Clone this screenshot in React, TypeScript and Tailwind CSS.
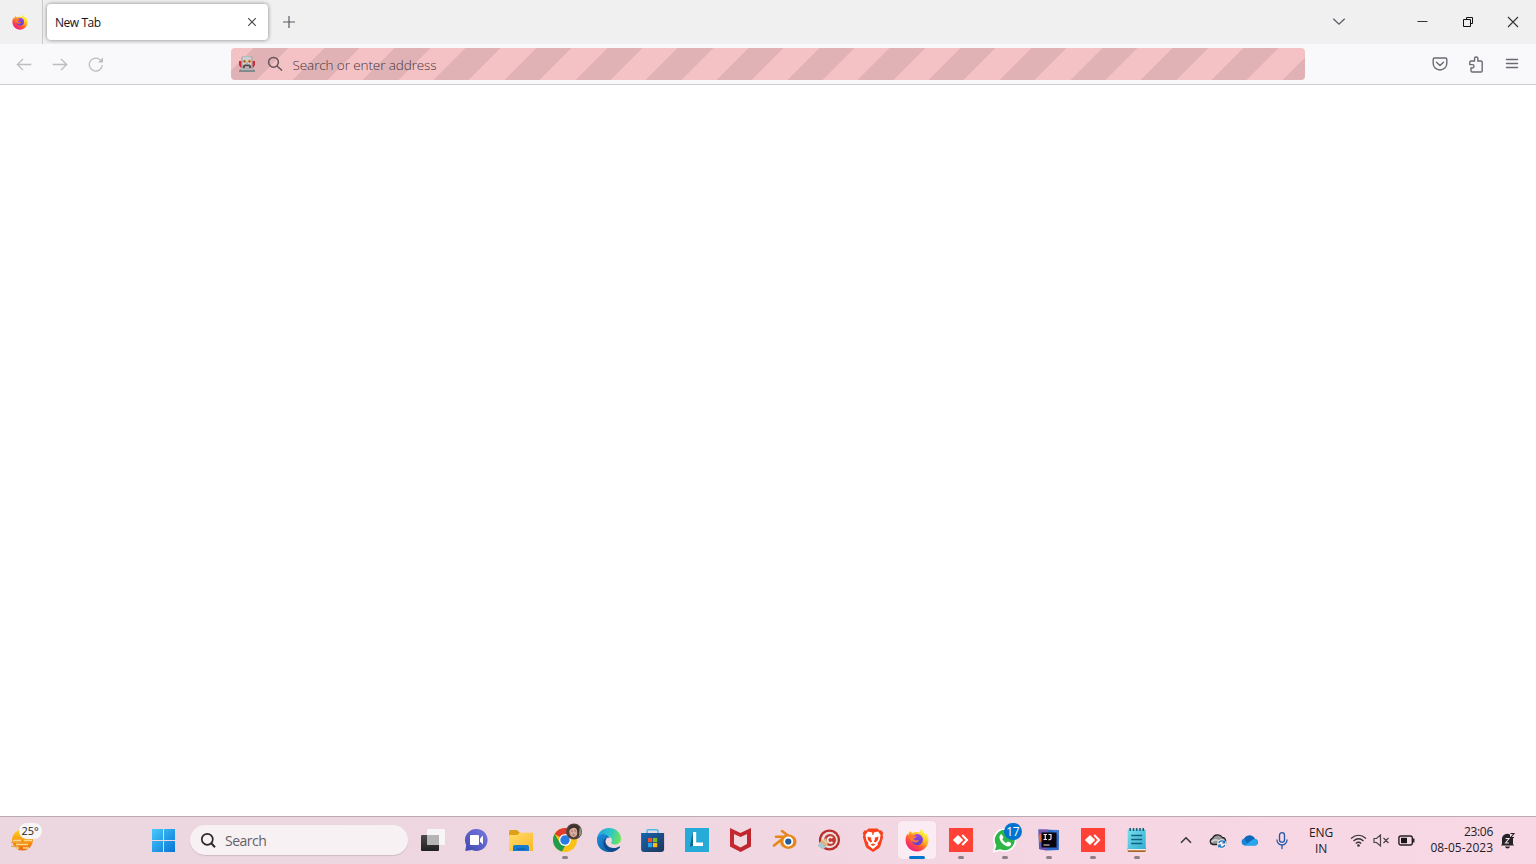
import type { ReactNode } from "react";

const UI = "font-['Open_Sans','Noto_Sans',sans-serif]";

function Firefox({ size, id }: { size: number; id: string }) {
  return (
    <svg width={size} height={size} viewBox="0 0 24 24">
      <defs>
        <linearGradient id={`${id}a`} x1="0.85" y1="0.1" x2="0.25" y2="0.95">
          <stop offset="0.1" stopColor="#fff044" />
          <stop offset="0.4" stopColor="#ffb41f" />
          <stop offset="0.65" stopColor="#ff5a34" />
          <stop offset="1" stopColor="#f21a80" />
        </linearGradient>
        <linearGradient id={`${id}b`} x1="0.3" y1="0" x2="0.6" y2="1">
          <stop offset="0" stopColor="#a646e8" />
          <stop offset="1" stopColor="#5a3fd0" />
        </linearGradient>
      </defs>
      <path
        d="M16.2.6c-1 1.3-1.3 2.700-.9 4.100-1.400-.7-3.200-.9-4.600-.6C9.500 4.100 8.600 4.500 7.800 5 6.700 4.700 6 4 5.600 2.900 4.300 3.700 3.600 5 3.500 6.400 2.700 7 2.400 7.100 2.500 5.700 1.100 7.700.5 10.200.6 12.800 1 19 6 23.500 12 23.500c6.500 0 11.500-5 11.500-11.400 0-2.800-.9-5.200-2.700-7.100.1.900.1 1.600-.1 2.300C19.700 4.900 17.200 3.500 16.200.6z"
        fill={`url(#${id}a)`}
      />
      <circle cx="12.300" cy="11.600" r="5.600" fill={`url(#${id}b)`} />
      <path d="M3 7.500c2-1.800 4.300-1.200 5.600.2 1.300-.2 2.500.2 3 .8-.1 1.100-2.100 1.300-2.600 2.100-.3 1.600 1.400 2.200 3.200 1.700 1.200-.4 1.800-.1 1.500.5-.8 1.700-3.700 2.500-6 .8C5 12 5 10.500 3 7.500z" fill="#ff7a2a" />
    </svg>
  );
}

function Robot() {
  return (
    <svg width="18" height="18" viewBox="0 0 18 18">
      <path d="M1 6h3v6.500H2.500L1 10zM17 6h-3v6.500h1.500L17 10z" fill="#d0283a" />
      <rect x="3.300" y="1" width="11.400" height="14" rx="2.500" fill="#a2a5a7" />
      <rect x="4.500" y="1.500" width="9" height="9.500" rx="1.500" fill="#cccfd0" />
      <circle cx="6.500" cy="6.300" r="1.600" fill="#e88b3e" />
      <circle cx="11.500" cy="6.300" r="1.600" fill="#e88b3e" />
      <circle cx="6.500" cy="6.300" r=".7" fill="#65451f" />
      <circle cx="11.500" cy="6.300" r=".7" fill="#65451f" />
      <path d="M8.300 8.500L9 7l.7 1.500z" fill="#80503a" />
      <path d="M5 13v-2.200l1.500-1.300h5l1.500 1.300V13z" fill="#56474a" />
      <path d="M6.800 11.300h4.400V13H6.800z" fill="#c8b9b6" />
      <path d="M1 17v-1.700l2-1.300h12l2 1.300V17z" fill="#86898c" />
      <path d="M3 14.500h12" stroke="#b9bdbf" />
    </svg>
  );
}

function AnyDesk() {
  return (
    <svg width="24" height="24" viewBox="0 0 24 24">
      <path d="M0 0h24v24H0z" fill="#ff4136" />
      <path d="M9 6.900l5.200 5.100L9 17.100 3.900 12z" fill="#fff" />
      <path d="M12.500 7.800l1.400-1.500 5.600 5.700-5.600 5.700-1.400-1.500 4-4.200z" fill="#fff" />
    </svg>
  );
}

const apps: { name: string; running?: boolean; active?: boolean; badge?: string; icon: ReactNode }[] = [
  {
    name: "taskview",
    icon: (
      <svg width="24" height="24" viewBox="0 0 24 24">
        <defs>
          <linearGradient id="tv" x1="0" y1="0" x2="0" y2="1"><stop stopColor="#4a4a4a" /><stop offset="1" stopColor="#202020" /></linearGradient>
        </defs>
        <rect x="0" y="7" width="18" height="16" rx="1" fill="url(#tv)" />
        <rect x="6" y="1" width="18" height="16" rx="1" fill="#f7f5f6" />
        <path d="M6 7H18v10H6z" fill="#b5b5b5" />
      </svg>
    ),
  },
  {
    name: "chat",
    icon: (
      <svg width="24" height="24" viewBox="0 0 24 24">
        <defs>
          <linearGradient id="ch" x1="0" y1="1" x2="1" y2="0"><stop stopColor="#4049ad" /><stop offset="1" stopColor="#7979e3" /></linearGradient>
        </defs>
        <path d="M11.500 1A11 11 0 1 1 7 22L.3 23 1.200 17A11 11 0 0 1 11.500 1z" fill="url(#ch)" />
        <rect x="5" y="7" width="9" height="10" rx="1" fill="#fff" />
        <path d="M15 10.500l3-3v9l-3-3z" fill="#fff" />
      </svg>
    ),
  },
  {
    name: "explorer",
    icon: (
      <svg width="26" height="24" viewBox="0 0 26 24">
        <defs>
          <linearGradient id="ex" x1="0" y1="0" x2="1" y2="1"><stop stopColor="#ffdc69" /><stop offset="1" stopColor="#fbb929" /></linearGradient>
        </defs>
        <path d="M1 3.500Q1 2 2.500 2H9l3 3v3H1z" fill="#dfa017" />
        <path d="M1 7h8l3-2.200h13V23H1z" fill="url(#ex)" />
        <path d="M5 23v-4q0-2 2-2h12q2 0 2 2v4z" fill="#147bcf" />
        <path d="M8.500 21h9" stroke="#09549d" strokeWidth="1" />
      </svg>
    ),
  },
  {
    name: "chrome",
    running: true,
    icon: (
      <svg className="overflow-visible" width="30" height="30" viewBox="0 2 30 30">
        <circle cx="15" cy="17" r="12" fill="#fbc116" />
        <path d="M15 17L4.600 11A12 12 0 0 1 25.400 11H15z" fill="#e33b2e" />
        <path d="M4.600 11L10 20l5 3-3 5.600A12 12 0 0 1 4.600 11z" fill="#229c4b" />
        <circle cx="15" cy="17" r="5.900" fill="#fff" />
        <circle cx="15" cy="17" r="4.700" fill="#287ae6" />
        <circle cx="24" cy="8.500" r="8" fill="#53413e" />
        <path d="M30 4q3 4 0 9l-2 1.500z" fill="#8d9274" />
        <ellipse cx="23.500" cy="8.500" rx="4.200" ry="5.800" fill="#d8a898" />
        <path d="M18.500 8c0-7 8-8.500 10.500-3v9c-2-2-1.300-6-2.500-8-2-2.200-5-1-8 2z" fill="#3c302e" />
        <path d="M21.200 8h1.300M24.500 8h1.300M22.500 12h2" stroke="#70473f" strokeWidth=".8" />
      </svg>
    ),
  },
  {
    name: "edge",
    icon: (
      <svg width="24" height="24" viewBox="0 0 24 24">
        <defs>
          <linearGradient id="ed" x1="0" y1=".2" x2="1" y2=".4"><stop stopColor="#279be0" /><stop offset=".55" stopColor="#2dc5ca" /><stop offset="1" stopColor="#6be45e" /></linearGradient>
          <linearGradient id="eb" x1="0" y1="0" x2="1" y2="1"><stop stopColor="#1b8fdb" /><stop offset="1" stopColor="#104f9d" /></linearGradient>
        </defs>
        <path d="M0 12C0 5 5 0 12 0c7 0 12 5 12 10.500 0 4-3 6-6 6-2.500 0-4.500-1-3.500-2.500 1.600-2.500-.5-5.800-4.500-5.800C5 8.200 1 10 0 12z" fill="url(#ed)" />
        <path d="M0 12C0 6.500 5 5.500 8 6.500c3 .8 4.500 2.500 4.800 3.500-3.800-1-5.800 2.500-4.300 6 2.500 5.500 9.500 5.500 13.500 2.700.8-.3 1.100.1.700.7C16.500 27.500 0 25 0 12z" fill="url(#eb)" />
        <path d="M8.500 10.500C4 13.500 6.500 22 14 23.800c3.500-.3 7-2.500 8.700-4.400.4-.6.1-1-.7-.7-4 2.100-10.800 1.800-13.100-3.200-.8-2-.5-3.900 1.100-5.200z" fill="#114a8c" />
      </svg>
    ),
  },
  {
    name: "store",
    icon: (
      <svg width="24" height="24" viewBox="0 0 24 24">
        <defs>
          <linearGradient id="st" x1="0" y1="0" x2="1" y2="1"><stop stopColor="#1465b3" /><stop offset="1" stopColor="#233557" /></linearGradient>
        </defs>
        <path d="M.1 5h23v16q0 3-3 3h-17q-3 0-3-3z" fill="url(#st)" />
        <path d="M6 5V3q0-1.300 1.300-1.300h8.400Q17 1.700 17 3v2" fill="none" stroke="#44bfee" strokeWidth="1.600" />
        <path d="M7 10h4.200v4.200H7z" fill="#ef5228" /><path d="M12 10h4.200v4.200H12z" fill="#7ebb20" />
        <path d="M7 15h4.200v4.200H7z" fill="#23a4e9" /><path d="M12 15h4.200v4.200H12z" fill="#fbb917" />
      </svg>
    ),
  },
  {
    name: "lightshot",
    icon: (
      <svg width="24" height="24" viewBox="0 0 24 24">
        <path d="M0 0h24v24H0z" fill="#26abd9" />
        <path d="M7.500 4L5 19l3-1.500z" fill="#155c83" />
        <path d="M8 4h3.200v10.500H18V18H8z" fill="#fff" />
      </svg>
    ),
  },
  {
    name: "mcafee",
    icon: (
      <svg width="24" height="24" viewBox="0 0 24 24">
        <path d="M1 0l10.500 5L22 0v18.500L11.500 24 1 18.500z" fill="#c5282f" />
        <path d="M5 6l6.500 3L18 6v10l-6.500 3.500L5 16z" fill="#f0d9e1" />
        <path d="M11.500 5L22 0v18.500L11.500 24v-4.500L18 16V6l-6.500 3z" fill="#a8202a" opacity=".2" />
      </svg>
    ),
  },
  {
    name: "blender",
    icon: (
      <svg width="26" height="24" viewBox="0 0 26 24">
        <path d="M2 17.500L13.500 8.500M4 8.800h12M10 3l10 7.500" stroke="#e6861b" strokeWidth="2.600" strokeLinecap="round" />
        <ellipse cx="16.300" cy="13.700" rx="8.200" ry="7.300" fill="#e6861b" />
        <circle cx="16.300" cy="13.500" r="4.900" fill="#fff" />
        <circle cx="16.300" cy="13.500" r="3.100" fill="#215b98" />
      </svg>
    ),
  },
  {
    name: "ccleaner",
    icon: (
      <svg width="24" height="24" viewBox="0 0 24 24">
        <circle cx="12.500" cy="12" r="10.600" fill="#b92f2b" />
        <circle cx="12.500" cy="12" r="8.300" fill="#eadfdc" />
        <circle cx="13" cy="12" r="6" fill="#c43a30" />
        <path d="M15.500 10a2.900 2.900 0 1 0 0 4" fill="none" stroke="#f3eae7" strokeWidth="1.900" />
        <path d="M9 10L3 14 1 18l5 3 5-5z" fill="#d8b47e" />
        <path d="M3 14l6 5-3 2.500-5-3.500z" fill="#a9c6d6" />
        <path d="M6.500 12l3.500 3.500" stroke="#e5d0a8" strokeWidth="1.300" />
      </svg>
    ),
  },
  {
    name: "brave",
    icon: (
      <svg width="24" height="24" viewBox="0 0 24 24">
        <path d="M7.500.5h9l2 2 1.800-.2 2 2.700-.7 2 .5 2-2.600 9q-.5 1.400-1.600 2.200L12 24l-5.900-3.800Q5 19.400 4.500 18L1.900 9l.5-2-.7-2 2-2.700 1.800.2z" fill="#f9411d" />
        <path d="M7 3.500l3 .7h4l3-.7 2.600 3.500-1 5.300-2 2.700.2 2-4.800 4-4.800-4 .2-2-2-2.700-1-5.300z" fill="#fff" />
        <path d="M6.500 8.500l4 1.200-.5 1.300 1.200 2.500-1.700 1-2.500-2.500zM17.500 8.500l-4 1.200.5 1.300-1.200 2.500 1.700 1 2.500-2.500zM11 3.500h2L12.500 7h-1zM9.300 16.500l2.700-1 2.700 1-2.700 1.500z" fill="#f9411d" />
      </svg>
    ),
  },
  { name: "firefox", active: true, icon: <Firefox size={24} id="task" /> },
  { name: "anydesk", running: true, icon: <AnyDesk /> },
  {
    name: "whatsapp",
    running: true,
    badge: "17",
    icon: (
      <svg className="overflow-visible" width="24" height="24" viewBox="0 0 24 24">
        <path d="M12 1A11 11 0 1 1 7 22L.8 23.500 2.500 17.500A11 11 0 0 1 12 1z" fill="#2db646" stroke="#fff" strokeWidth="1.600" />
        <path d="M7.200 6.800l1.500-.5 1.800 3.200-1.200 1.800q1.600 2.700 4.100 3.800l1.500-1.700 3.200 1.500q.1 3.700-3.500 3.500C9.500 17.700 4.500 10.500 7.200 6.800z" fill="#fff" />
      </svg>
    ),
  },
  {
    name: "intellij",
    running: true,
    icon: (
      <svg width="24" height="24" viewBox="0 0 24 24">
        <path d="M1.500 1.500l20.500.5-.2 20L10 22.500 2 21z" fill="#2b67c9" />
        <path d="M1.500 1.500h10L7 12l-5 2z" fill="#7a5aa8" /><path d="M1.500 7l6-2v6l-5 4z" fill="#e9683f" />
        <path d="M2 15l9 5-2 2.500-7-1.500z" fill="#6a55b5" /><path d="M14 2h8v6z" fill="#3f7bd0" />
        <path d="M4.500 4.500h15v15h-15z" fill="#080409" />
        <path d="M6.500 6.500h3.500M8.300 6.500v5M6.500 11.500H10M11.500 6.500H14v4q0 1.200-1.300 1.200h-1.200M6.500 17h6" stroke="#f0e6f0" strokeWidth="1.200" fill="none" />
      </svg>
    ),
  },
  { name: "anydesk2", running: true, icon: <AnyDesk /> },
  {
    name: "notepad",
    running: true,
    icon: (
      <svg width="24" height="24" viewBox="0 0 24 24">
        <defs>
          <linearGradient id="np" x1="0" y1="0" x2="1" y2="1"><stop stopColor="#76e0ed" /><stop offset="1" stopColor="#35acd2" /></linearGradient>
        </defs>
        <rect x="2.700" y="19" width="18" height="5" rx="1" fill="#a96421" />
        <path d="M2.700 21h18v1.300h-18z" fill="#f3eeee" />
        <rect x="2.700" y="1.500" width="18" height="19.500" rx="1" fill="url(#np)" />
        <path d="M5.200 0v3M8.500 0v3M11.700 0v3M15 0v3M18.200 0v3" stroke="#166379" strokeWidth="1.600" />
        <path d="M6.200 7.500h11M6.200 11.500h11M6.200 15.500h11" stroke="#12627e" strokeWidth="1.500" />
      </svg>
    ),
  },
];

function TitleBar() {
  return (
    <header className="flex h-11 shrink-0 bg-[#f0f0f0]">
      <div className="flex w-[43px] items-center justify-center border-r border-[#cacaca] pr-[3px]"><Firefox size={16} id="top" /></div>
      <div className="ml-1 mt-1 flex h-9 w-[221px] items-center justify-between rounded bg-white pl-2 pr-[11px] shadow-[0_0_4px_rgba(0,0,0,0.45)]">
        <span className="pt-[2px] text-[12px] leading-none tracking-[-0.45px] text-[#15141a]">New Tab</span>
        <svg width="10" height="10" viewBox="0 0 10 10"><path d="M1.200 1.200l7.600 7.600M8.800 1.200L1.200 8.800" stroke="#47464d" strokeWidth="1.100" /></svg>
      </div>
      <div className="ml-[14px] flex items-center"><svg width="14" height="14" viewBox="0 0 14 14"><path d="M7 1v12M1 7h12" stroke="#5b5a63" strokeWidth="1.200" /></svg></div>
      <div className="ml-auto flex items-center pr-[17px]">
        <svg className="mr-[70px]" width="14" height="14" viewBox="0 0 14 14"><path d="M1.300 3.800L7 9.200l5.700-5.400" fill="none" stroke="#5b5a63" strokeWidth="1.300" /></svg>
        <svg className="mr-[34px]" width="12" height="12" viewBox="0 0 12 12"><path d="M1.500 5.500h10" stroke="#333" /></svg>
        <svg className="mr-[33px]" width="12" height="12" viewBox="0 0 12 12"><path d="M1.500 3.500h7v7h-7zM4.500 3.500v-2h6v6h-2" fill="none" stroke="#111" /></svg>
        <svg width="12" height="12" viewBox="0 0 12 12"><path d="M1 1l10 10M11 1L1 11" stroke="#333" strokeWidth="1.100" /></svg>
      </div>
    </header>
  );
}

function NavigationBar() {
  return (
    <div className="flex h-[41px] shrink-0 items-start border-b border-[#cccccf] bg-[#f9f9fb] pt-1">
      <div className="flex h-8 w-[231px] shrink-0 items-center gap-5 pl-4">
        <svg width="16" height="16" viewBox="0 0 16 16"><path d="M15.300 8.500H1.300M7 3L1.300 8.500 7 14" fill="none" stroke="#bdbdc1" strokeWidth="1.300" /></svg>
        <svg width="16" height="16" viewBox="0 0 16 16"><path d="M.7 8.500H14.700M9 3l5.700 5.500L9 14" fill="none" stroke="#bdbdc1" strokeWidth="1.300" /></svg>
        <svg width="16" height="16" viewBox="0 0 16 16"><path d="M14.300 9A6.500 6.500 0 1 1 11.700 3.400L13.500 5" fill="none" stroke="#bdbdc1" strokeWidth="1.300" /><path d="M15 1.500v5h-5z" fill="#bdbdc1" /></svg>
      </div>
      <div className="flex h-8 w-[1074px] shrink-0 items-center rounded bg-[repeating-linear-gradient(135deg,#f4c2c5_0px,#f4c2c5_15.9px,#e0b2b5_15.9px,#e0b2b5_40.9px,#f4c2c5_40.9px,#f4c2c5_50px)] pl-[7px]">
        <Robot />
        <svg className="ml-[11px]" width="16" height="16" viewBox="0 0 16 16"><circle cx="6.500" cy="6.300" r="4.900" fill="none" stroke="#65545b" strokeWidth="1.500" /><path d="M10 10l5 4.500" stroke="#65545b" strokeWidth="1.600" /></svg>
        <span className="ml-[9.500px] pt-[3px] text-[13.5px] font-light leading-none tracking-[-0.1px] text-[#46363c]">Search or enter address</span>
      </div>
      <div className="ml-auto flex h-8 items-center gap-5 pr-4">
        <svg width="16" height="16" viewBox="0 0 16 16"><path d="M2.500 2h11q1.300 0 1.300 1.300V7.500a6.800 6.500 0 0 1-13.600 0V3.300Q1.200 2 2.500 2zM4.500 6.300L8 9.500l3.500-3.200" fill="none" stroke="#6a6a73" strokeWidth="1.400" strokeLinecap="round" /></svg>
        <svg width="16" height="17" viewBox="0 0 16 17"><path d="M3 5h3.500V2.700a1.700 1.700 0 0 1 3.400 0V5H13q1.200 0 1.200 1.200v8.600q0 1.200-1.200 1.200H4.200Q3 16 3 14.800V12h1.300a1.700 1.700 0 0 0 0-3.400H1.800V6.200Q1.800 5 3 5z" fill="none" stroke="#6a6a73" strokeWidth="1.400" /></svg>
        <svg width="16" height="16" viewBox="0 0 16 16"><path d="M2.500 3.500h11M2.500 7.500h11M2.500 11.500h11" stroke="#6a6a73" strokeWidth="1.400" strokeLinecap="round" /></svg>
      </div>
    </div>
  );
}

function Weather() {
  return (
    <div className="relative flex w-[151px] pl-[10px] pt-3">
      <svg width="25" height="25" viewBox="0 0 25 25">
        <defs><linearGradient id="sun" x1="0" y1="0" x2="0" y2="1"><stop stopColor="#ffd11d" /><stop offset="1" stopColor="#ef680a" /></linearGradient></defs>
        <circle cx="12.500" cy="11" r="10.500" fill="url(#sun)" />
        <path d="M3 11.500h8M14 11.500h8M6 15.500h12M5 19h4M13 19h6" stroke="#f8d98e" strokeWidth="1.300" />
        <path d="M1 13.500h9M1 17.300h7" stroke="#dfaa43" strokeWidth="1.200" />
      </svg>
      <span className="absolute left-[19px] top-[6px] flex h-4 w-[23px] items-center justify-center rounded-full bg-[#f8f5f7] pb-px pr-px text-[11px] leading-none tracking-[-0.1px] text-[#242424]">25°</span>
    </div>
  );
}

function Tray() {
  return (
    <div className="ml-auto flex h-[47px] items-center text-[#242124]">
      <svg className="mr-[16px]" width="14" height="12" viewBox="0 0 14 12"><path d="M2 7.800l5-5 5 5" fill="none" stroke="#333" strokeWidth="1.500" /></svg>
      <svg className="mr-[14px]" width="18" height="16" viewBox="0 0 18 16">
        <path d="M4 11.500a3.200 3.200 0 0 1-.5-6.200A5.500 5.500 0 0 1 13.300 4.500c2.200 0 3.500 1.700 3.300 4v3z" fill="#999" stroke="#252525" strokeWidth="1.300" />
        <path d="M2.500 9Q6 5 10.500 8.500" stroke="#d2d2d2" strokeWidth="1.600" fill="none" />
        <circle cx="12.800" cy="11" r="4.700" fill="#f6eef6" />
        <path d="M9.800 10a3.200 3.200 0 0 1 5.500-1M15.700 7.500v2.300h-2.300M15.800 12a3.200 3.200 0 0 1-5.500 1M9.800 14.500v-2.300h2.300" fill="none" stroke="#1b72bc" strokeWidth="1.200" />
      </svg>
      <svg className="mr-[17px]" width="18" height="16" viewBox="0 0 18 16"><path d="M4 12.500a3.500 3.500 0 0 1-.7-6.900A6 6 0 0 1 14 6a3.300 3.300 0 0 1 .5 6.500z" fill="#1688d7" /><path d="M3.300 5.600A6 6 0 0 1 14 6l-8 4.500z" fill="#1267b8" /><path d="M4 12.500L11 7q2-1.500 4-.5a3.300 3.300 0 0 1-.5 6z" fill="#27a5ed" /></svg>
      <svg className="mr-[21px]" width="12" height="18" viewBox="0 0 12 18"><rect x="3.500" y=".7" width="5" height="9.500" rx="2.500" fill="none" stroke="#2456a5" strokeWidth="1.300" /><path d="M1 8a5 5 0 0 0 10 0M6 13v3.500" fill="none" stroke="#2456a5" strokeWidth="1.300" strokeLinecap="round" /></svg>
      <div className="w-6 text-center text-[12px] leading-4 tracking-[-0.2px]"><div>ENG</div><div>IN</div></div>
      <div className="ml-[17px] flex items-center gap-[6px]">
        <svg width="17" height="14" viewBox="0 0 17 14"><path d="M1 4.500Q8.500-2 16 4.500M3.500 7q5-4.500 10 0M5.800 9.500q2.700-2.500 5.400 0" fill="none" stroke="#332f33" strokeWidth="1.200" /><circle cx="8.500" cy="11.500" r="1.300" fill="#332f33" /></svg>
        <svg width="17" height="14" viewBox="0 0 17 14"><path d="M1 4.500h2.500L7.500 1v11l-4-3.500H1zM10.500 4l5 5M15.500 4l-5 5" fill="none" stroke="#494449" strokeWidth="1.200" /></svg>
        <svg className="ml-0.5" width="17" height="14" viewBox="0 0 17 14"><rect x=".9" y="2" width="13.400" height="9" rx="2" fill="none" stroke="#242124" strokeWidth="1.400" /><rect x="3" y="3.800" width="6" height="5.400" fill="#171517" /><path d="M15.700 4.500v4" stroke="#242124" strokeWidth="1.500" /></svg>
      </div>
      <div className="ml-[13px] w-[65px] pb-[2px] text-right text-[12px] leading-4"><div className="tracking-[-0.3px]">23:06</div><div>08-05-2023</div></div>
      <svg className="ml-[7px] mr-[21px]" width="15" height="18" viewBox="0 0 15 18">
        <path d="M2 12V7a5.300 5.300 0 0 1 8-4.500V5h3v7l1 1.500H1zM5 14.500h5q-.5 2-2.500 2T5 14.500z" fill="#252225" />
        <path d="M5.500 6.500H9L5.500 11H9" fill="none" stroke="#f5dce6" strokeWidth="1.100" />
        <path d="M10.500 1.500H14l-3.300 4H14" fill="none" stroke="#252225" strokeWidth="1.100" />
      </svg>
    </div>
  );
}

function Taskbar() {
  return (
    <footer className="flex h-12 shrink-0 overflow-hidden border-t border-[#bba9b3] bg-[linear-gradient(90deg,#ecd6e0_0%,#ecd6e0_20%,#f0d7e1_48%,#f6d6e3_72%,#f8d8e5_100%)]">
      <Weather />
      <div className="flex h-[47px] w-[39px] items-center">
        <svg width="25" height="25" viewBox="0 0 25 25">
          <defs><linearGradient id="win" gradientUnits="userSpaceOnUse" x1="1" y1="1" x2="24" y2="24"><stop stopColor="#47cafd" /><stop offset="1" stopColor="#0874d4" /></linearGradient></defs>
          <path d="M1 1h11v11H1zM13 1h11v11H13zM1 13h11v11H1zM13 13h11v11H13z" fill="url(#win)" />
        </svg>
      </div>
      <div className="mt-2 flex h-[30px] w-[218px] shrink-0 items-center rounded-full bg-[#f8f1f4] pl-[10px] shadow-[0_1px_1px_#cdbbc4]">
        <svg width="17" height="17" viewBox="0 0 17 17"><circle cx="7.300" cy="7.300" r="5.500" fill="none" stroke="#2b292c" strokeWidth="1.700" /><path d="M11.300 11.300l3.700 3.900" stroke="#2b292c" strokeWidth="2" /></svg>
        <span className="ml-[8px] pt-px text-[14px] leading-none tracking-[-0.5px] text-[#656066]">Search</span>
      </div>
      <div className="ml-[2.8px] flex h-[47px] shrink-0">
        {apps.map((app) => (
          <div key={app.name} className="relative flex w-11 items-center justify-center">
            {app.active && <div className="absolute left-[3px] top-1 h-[38px] w-[38px] rounded bg-[#faecf2] shadow-[0_0_1px_#d5bdc9]" />}
            <div className="relative -mt-px flex shrink-0 items-center justify-center">{app.icon}</div>
            {app.badge && <span className="absolute left-[21px] top-[6px] flex h-[17px] w-[18px] items-center justify-center rounded-full bg-[#0074ce] text-[12px] leading-none tracking-[-0.4px] text-white">{app.badge}</span>}
            {app.running && <i className="absolute bottom-[5px] left-[19px] h-[3px] w-1.5 rounded-full bg-[#8c8088]" />}
            {app.active && <i className="absolute bottom-[5px] left-[14px] h-[3px] w-4 rounded-full bg-[#0074d0]" />}
          </div>
        ))}
      </div>
      <Tray />
    </footer>
  );
}

export default function App() {
  return (
    <div className={`flex h-screen w-full flex-col overflow-hidden bg-white ${UI}`}>
      <TitleBar />
      <NavigationBar />
      <main className="min-h-0 flex-1 bg-white" />
      <Taskbar />
    </div>
  );
}
